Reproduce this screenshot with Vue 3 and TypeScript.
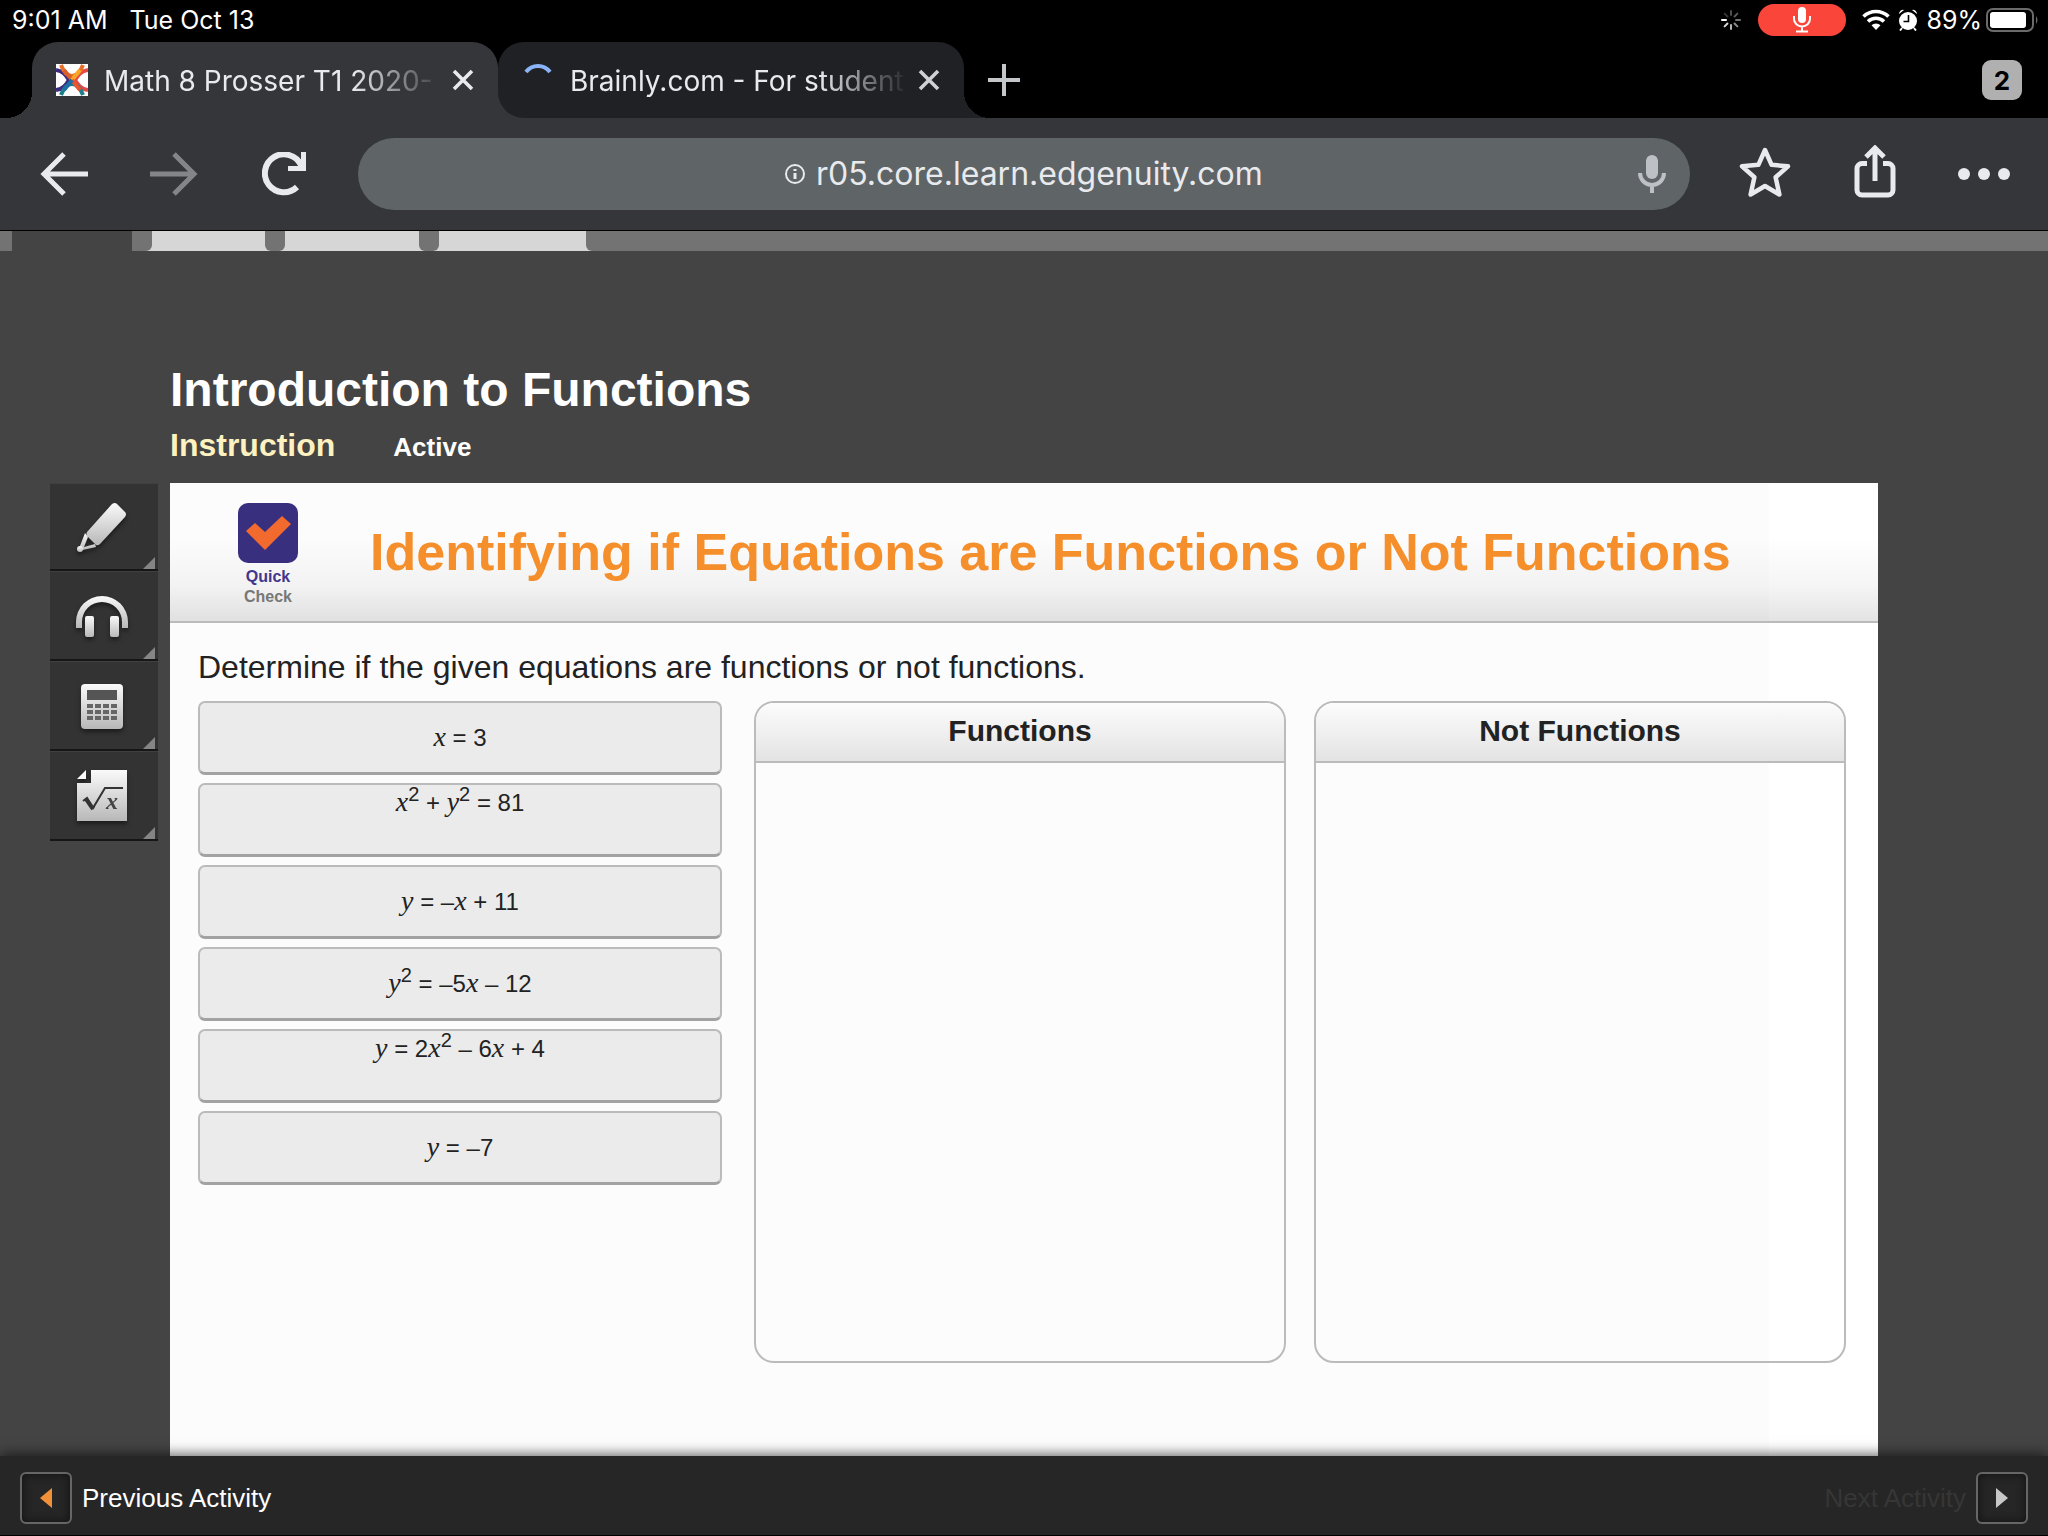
<script setup lang="ts">
import { ref } from 'vue'

type Kind = 'num' | 'var' | 'sup'
interface Token { kind: Kind; text: string }
interface Equation { tokens: Token[]; raised: boolean }

const n = (text: string): Token => ({ kind: 'num', text })
const v = (text: string): Token => ({ kind: 'var', text })
const s = (text: string): Token => ({ kind: 'sup', text })

const equations: Equation[] = [
  { raised: false, tokens: [v('x'), n(' = 3')] },
  { raised: true, tokens: [v('x'), s('2'), n(' + '), v('y'), s('2'), n(' = 81')] },
  { raised: false, tokens: [v('y'), n(' = –'), v('x'), n(' + 11')] },
  { raised: false, tokens: [v('y'), s('2'), n(' = –5'), v('x'), n(' – 12')] },
  { raised: true, tokens: [v('y'), n(' = 2'), v('x'), s('2'), n(' – 6'), v('x'), n(' + 4')] },
  { raised: false, tokens: [v('y'), n(' = –7')] },
]
const bins = ['Functions', 'Not Functions']
const tools = ['Highlighter', 'Read aloud', 'Calculator', 'Formulas']
const address = ref('r05.core.learn.edgenuity.com')
const rays = [0.3, 0.35, 0.45, 0.55, 0.7, 0.85, 1, 0.2]
</script>

<template>
  <div class="screen">
    <header class="browser">
      <div class="status">
        <span>9:01 AM</span>
        <span class="date">Tue Oct 13</span>
        <svg class="busy" width="22" height="22" viewBox="-11 -11 22 22" stroke="#fff" stroke-width="2" stroke-linecap="round">
          <line v-for="(o, i) in rays" :key="i" x1="0" y1="-5" x2="0" y2="-9" :opacity="o" :transform="`rotate(${i * 45})`" />
        </svg>
        <span class="recording">
          <svg width="20" height="26" viewBox="0 0 20 26" fill="none" stroke="#fff" stroke-width="2">
            <rect x="6" y="0" width="8" height="16" rx="4" fill="#fff" stroke="none" />
            <path d="M2 9v3a8 7.500 0 0 0 16 0V9M10 19v5M4 24.500h12" />
          </svg>
        </span>
        <svg class="wifi" width="28" height="22" viewBox="0 0 28 22" fill="none" stroke="#fff" stroke-width="3.600">
          <path d="M1.500 7.500a18 18 0 0 1 25 0M6 12.500a11.500 11.500 0 0 1 16 0" />
          <path d="M14 21l-4.500-4.700a6.500 6.500 0 0 1 9 0z" fill="#fff" stroke="none" />
        </svg>
        <svg class="alarm" width="20" height="22" viewBox="0 0 20 22">
          <circle cx="10" cy="12" r="9" fill="#fff" />
          <path d="M1 5a4 4 0 0 1 5-4zM19 5a4 4 0 0 0-5-4z" fill="#fff" />
          <path d="M4 19l-2 2.500M16 19l2 2.500" stroke="#fff" stroke-width="2" />
          <path d="M10.500 6v6.500H5.500" fill="none" stroke="#000" stroke-width="1.600" />
        </svg>
        <span class="percent">89%</span>
        <svg class="battery" width="54" height="24" viewBox="0 0 54 24">
          <rect x="1" y="1" width="46" height="22" rx="6" fill="none" stroke="#6b6b6b" stroke-width="2" />
          <rect x="4" y="4" width="36" height="16" rx="3" fill="#fff" />
          <path d="M50 8q3 4 0 8z" fill="#6b6b6b" />
        </svg>
      </div>

      <div class="tabs">
        <div class="tab active">
          <svg class="favicon" width="32" height="32" viewBox="0 0 32 32" fill="none" stroke-width="4">
            <rect width="32" height="32" fill="#fff" />
            <path d="M0 6c7 1 10 5 13 10-3 5-6 9-13 10" stroke="#3b2a80" />
            <path d="M32 6c-7 1-10 5-13 10 3 5 6 9 13 10" stroke="#e5484a" />
            <path d="M5 1c3 8 7 11 11 11s8-3 11-11" stroke="#e8702a" />
            <path d="M5 31c3-8 7-11 11-11s8 3 11 11" stroke="#1f7f8c" />
            <path d="M8 6l8 10" stroke="#d95f2b" />
            <path d="M24 6l-8 10" stroke="#f9a825" />
            <path d="M16 16l8 10" stroke="#e8562f" />
            <path d="M16 16l-8 10" stroke="#1d6fa5" />
          </svg>
          <span class="tab-name">Math 8 Prosser T1 2020-</span>
          <button class="icon" aria-label="Close tab">
            <svg width="22" height="22" viewBox="0 0 22 22" stroke="#e8eaed" stroke-width="3.600"><path d="M2 2l18 18M20 2L2 20" /></svg>
          </button>
        </div>
        <div class="tab waiting">
          <svg class="favicon" width="32" height="32" viewBox="0 0 32 32" fill="none" stroke="#8ab4f8" stroke-width="4">
            <path d="M4 8A15 15 0 0 1 28 8" />
          </svg>
          <span class="tab-name">Brainly.com - For student</span>
          <button class="icon" aria-label="Close tab">
            <svg width="22" height="22" viewBox="0 0 22 22" stroke="#cfd1d4" stroke-width="3.600"><path d="M2 2l18 18M20 2L2 20" /></svg>
          </button>
        </div>
        <button class="icon new-tab" aria-label="New tab">
          <svg width="32" height="32" viewBox="0 0 32 32" stroke="#c4c7ca" stroke-width="4"><path d="M16 0v32M0 16h32" /></svg>
        </button>
        <button class="count">2</button>
      </div>

      <nav class="toolbar">
        <button class="icon" aria-label="Back">
          <svg width="48" height="44" viewBox="0 0 48 44" fill="none" stroke="#e8eaed" stroke-width="5"><path d="M48 22H4M24 2L4 22l20 20" /></svg>
        </button>
        <button class="icon forward" aria-label="Forward">
          <svg width="48" height="44" viewBox="0 0 48 44" fill="none" stroke="#848589" stroke-width="5"><path d="M0 22h44M24 2l20 20-20 20" /></svg>
        </button>
        <button class="icon reload" aria-label="Reload">
          <svg width="46" height="44" viewBox="0 0 46 44" fill="none" stroke="#e8eaed" stroke-width="6">
            <path d="M35 35A19 19 0 1 1 39 13" />
            <path d="M44 0v19H26v-5h10l3-5V0z" fill="#e8eaed" stroke="none" />
          </svg>
        </button>
        <label class="omnibox">
          <svg class="info" width="22" height="22" viewBox="0 0 22 22" fill="none" stroke="#e8eaed" stroke-width="2">
            <circle cx="11" cy="11" r="9" /><path d="M11 10v6M11 6v2" stroke-width="3" />
          </svg>
          <input v-model="address" type="text" aria-label="Address">
          <svg class="mic" width="28" height="38" viewBox="0 0 28 38" fill="none" stroke="#bdc1c6" stroke-width="4">
            <rect x="8" y="0" width="12" height="24" rx="6" fill="#bdc1c6" stroke="none" />
            <path d="M2 18a12 12 0 0 0 24 0M14 30v8" />
          </svg>
        </label>
        <button class="icon lifted" aria-label="Bookmark">
          <svg width="54" height="54" viewBox="0 0 54 54" fill="none" stroke="#e8eaed" stroke-width="4.500" stroke-linejoin="round">
            <path d="M27 5l6.600 14.800L50 21.300 37.600 32.300l3.800 17.200L27 41 12.600 49.500l3.800-17.200L4 21.300l16.400-1.500z" />
          </svg>
        </button>
        <button class="icon share lifted" aria-label="Share">
          <svg width="42" height="54" viewBox="0 0 42 54" fill="none" stroke="#e8eaed" stroke-width="5">
            <path d="M13 18.500H8a5 5 0 0 0-5 5V45a5 5 0 0 0 5 5h26a5 5 0 0 0 5-5V23.500a5 5 0 0 0-5-5h-5M21 36V4M12 12l9-9 9 9" />
          </svg>
        </button>
        <button class="icon more" aria-label="More">
          <svg width="52" height="12" viewBox="0 0 52 12" fill="#e8eaed"><circle cx="6" cy="6" r="6" /><circle cx="26" cy="6" r="6" /><circle cx="46" cy="6" r="6" /></svg>
        </button>
      </nav>
    </header>

    <div class="strip"><i class="edge" /><i class="gap" /><i class="div" /><i class="lit a" /><i class="div" /><i class="lit b" /><i class="div" /><i class="lit c" /><i class="rest" /></div>

    <main class="lesson">
      <h1>Introduction to Functions</h1>
      <p class="meta"><span class="phase">Instruction</span><span class="state">Active</span></p>
      <div class="workspace">
        <aside class="rail">
          <svg width="0" height="0" class="defs">
            <linearGradient id="metal" x1="0" y1="0" x2="0" y2="1"><stop offset="0" stop-color="#fafafa" /><stop offset="1" stop-color="#b8b8b8" /></linearGradient>
          </svg>
          <button v-for="(tool, i) in tools" :key="tool" class="tool" :aria-label="tool">
            <svg v-if="i === 0" width="52" height="52" viewBox="0 0 52 52" fill="url(#metal)">
              <path d="M36 3q3-2 5 0l8 8q2 2 0 5L24 43q-2 2-4 1l-9-9q-1-2 0-4z" />
              <path d="M9 32L2 50l18-4-1-3-11 3 4-10z" /><circle cx="4" cy="48" r="3" />
            </svg>
            <svg v-else-if="i === 1" width="52" height="52" viewBox="0 0 52 52" fill="url(#metal)">
              <path d="M0 38V32a26 26 0 0 1 52 0v6h-6v-6a20 20 0 0 0-40 0v6z" />
              <rect x="9" y="26" width="9" height="21" rx="2" /><rect x="34" y="26" width="9" height="21" rx="2" />
            </svg>
            <svg v-else-if="i === 2" width="52" height="52" viewBox="0 0 52 52">
              <rect x="5" y="4" width="42" height="45" rx="4" fill="url(#metal)" />
              <rect x="11" y="10" width="30" height="10" fill="#555" />
              <g fill="#666">
                <template v-for="r in 3" :key="r"><rect v-for="c in 4" :key="c" :x="3 + c * 8" :y="18 + r * 6" width="6" height="4" /></template>
              </g>
            </svg>
            <svg v-else width="52" height="52" viewBox="0 0 52 52">
              <path d="M15 0h36v51H1V13h14z" fill="url(#metal)" /><path d="M1 9L10 0v9z" fill="#fff" />
              <path d="M7 31l4-3 6 10L29 18h18" fill="none" stroke="#333" stroke-width="2" /><path d="M10 29l7 10" stroke="#333" stroke-width="4" />
              <text x="30" y="39" class="radicand">x</text>
            </svg>
          </button>
        </aside>

        <section class="activity">
          <header class="banner">
            <div class="badge">
              <svg width="60" height="60" viewBox="0 0 60 60"><rect width="60" height="60" rx="10" fill="#38307f" /><path d="M8 28l9-8 10 9 17-16 9 8-26 26z" fill="#f26a2e" /></svg>
              <b>Quick</b><b class="grey">Check</b>
            </div>
            <h2>Identifying if Equations are Functions or Not Functions</h2>
          </header>
          <p class="prompt">Determine if the given equations are functions or not functions.</p>
          <div class="board">
            <div class="cards">
              <button v-for="(eq, i) in equations" :key="i" class="card" :class="{ raised: eq.raised }">
                <span v-for="(t, j) in eq.tokens" :key="j" :class="t.kind">{{ t.text }}</span>
              </button>
            </div>
            <div v-for="bin in bins" :key="bin" class="bin"><h3>{{ bin }}</h3></div>
          </div>
        </section>
      </div>
    </main>

    <footer class="pager">
      <button class="step"><span class="box"><svg width="12" height="20" viewBox="0 0 12 20"><path d="M12 0v20L0 10z" fill="#f0913a" /></svg></span>Previous Activity</button>
      <button class="step next" disabled>Next Activity<span class="box"><svg width="12" height="20" viewBox="0 0 12 20"><path d="M0 0v20l12-10z" fill="#c8c8c8" /></svg></span></button>
    </footer>
  </div>
</template>

<style>
body { margin: 0; background: #444; }
</style>

<style scoped>
* { box-sizing: border-box; }
h1, h2, h3, p { margin: 0; }
button { border: 0; padding: 0; background: none; color: inherit; font: inherit; }
svg { display: block; flex: none; }
.screen { min-height: 100vh; display: flex; flex-direction: column; background: #444; font-family: "Liberation Sans", Arial, sans-serif; }
.browser { font-family: Inter, sans-serif; color: #fff; background: #000; border-bottom: 1px solid #000; }
.icon { display: flex; flex: none; }

.status { display: flex; align-items: center; height: 42px; padding: 0 8px 2px 12px; font-size: 25px; }
.date { margin: 0 auto 0 22px; }
.busy { margin-right: 16px; }
.recording { display: flex; justify-content: center; align-items: center; width: 88px; height: 32px; border-radius: 16px; background: #f9453a; }
.wifi { margin-left: 16px; }
.alarm { margin: 0 8px; }
.battery { margin-left: 4px; }

.tabs { display: flex; align-items: center; height: 76px; padding: 0 26px 0 32px; }
.tab { position: relative; display: flex; align-items: center; width: 466px; height: 76px; padding: 0 24px; border-radius: 26px 26px 0 0; font-size: 28px; color: #e8eaed; }
.tab.active { background: #35363a; }
.tab.waiting { background: #202124; border-bottom-left-radius: 26px; }
.tab.active::before, .tab.active::after, .tab.waiting::after { content: ""; position: absolute; bottom: 0; width: 26px; height: 26px; }
.tab.active::before { left: -26px; background: radial-gradient(circle at 0 0, transparent 26px, #35363a 26px); }
.tab.active::after { right: -26px; background: #35363a; z-index: 0; }
.tab.waiting { z-index: 1; }
.tab.waiting::after { right: -26px; background: radial-gradient(circle at 100% 0, transparent 26px, #202124 26px); }
.tab-name { flex: 1; min-width: 0; margin: 0 2px 0 16px; padding-top: 2px; white-space: nowrap; mask-image: linear-gradient(90deg, #000 72%, transparent 98%); }
.new-tab { margin: 0 auto 0 24px; }
.count { width: 40px; height: 40px; border-radius: 9px; background: #b0b0b0; color: #000; font-size: 26px; font-weight: 700; }

.toolbar { display: flex; align-items: center; height: 112px; padding: 0 38px 0 40px; background: #35363a; }
.forward { margin-left: 62px; }
.reload { margin: 0 50px 0 64px; }
.omnibox { display: flex; flex: 1; align-items: center; height: 72px; margin-right: 48px; padding: 0 24px 0 52px; border-radius: 36px; background: #5f6467; }
.info { margin-left: auto; }
.omnibox input { width: 448px; margin: 0 auto 0 10px; padding: 0 0 2px; border: 0; background: none; color: #e8eaed; font-family: inherit; font-size: 32px; }
.lifted { padding-bottom: 4px; }
.share { margin-left: 62px; }
.more { margin-left: 62px; }

.strip { display: flex; height: 20px; background: #d6d6d6; }
.edge { width: 12px; background: #737373; }
.gap { width: 120px; background: #444; }
.div { width: 20px; background: #737373; border-radius: 0 0 6px 6px; }
.gap + .div { border-bottom-left-radius: 0; }
.lit.a { width: 113px; }
.lit.b { width: 134px; }
.lit.c { width: 147px; }
.rest { flex: 1; background: #737373; border-bottom-left-radius: 6px; }

.lesson { flex: 1; display: flex; flex-direction: column; padding-top: 110px; }
h1 { padding-left: 170px; font-size: 48px; line-height: 58px; color: #fff; }
.meta { display: flex; align-items: baseline; padding-left: 170px; font-weight: 700; line-height: 36px; margin: 8px 0 18px; }
.phase { font-size: 32px; color: #fdf2c0; }
.state { margin-left: 58px; font-size: 26px; color: #fff; }
.workspace { flex: 1; display: flex; gap: 12px; padding: 0 170px 0 50px; }
.rail { width: 108px; }
.defs { position: absolute; }
.tool { position: relative; display: flex; align-items: center; justify-content: center; width: 108px; height: 90px; padding-right: 4px; background: #333; border-bottom: 2px solid #161616; border-top: 1px solid #404040; }
.tool:first-of-type { height: 88px; }
.tool svg { filter: drop-shadow(0 3px 2px #1c1c1c); }
.tool::after { content: ""; position: absolute; right: 3px; bottom: 0; border: 6px solid transparent; border-right-color: #858585; border-bottom-color: #858585; }
.radicand { font: italic 700 24px "Liberation Serif", serif; fill: #444; }

.activity { flex: 1; min-width: 0; background: linear-gradient(90deg, #fcfcfc 93.600%, #fff 93.600%); }
.banner { display: flex; align-items: center; height: 140px; padding-left: 68px; border-bottom: 2px solid #bbb; background: linear-gradient(#fff0 40%, #0000000a 75%, #0000001c); }
.badge { display: flex; flex-direction: column; align-self: flex-start; align-items: center; width: 60px; margin-top: 20px; font-size: 16px; line-height: 20px; color: #43368c; }
.badge svg { margin-bottom: 4px; }
.grey { color: #777; }
h2 { margin-left: 72px; font-size: 52px; line-height: 60px; color: #f58f2c; white-space: nowrap; }
.prompt { padding: 24px 28px 14px; font-size: 32px; line-height: 40px; color: #222; }
.board { display: grid; grid-template-columns: 528fr 532fr 532fr; column-gap: 28px; padding: 0 32px 0 28px; color: #222; }
.cards { display: flex; flex-direction: column; gap: 8px; margin-right: 4px; }
.card { height: 74px; padding: 0; border: 2px solid #bbb; border-bottom: 3px solid #a2a2a2; border-radius: 7px; background: #ebebeb; font-size: 24px; line-height: 28px; white-space: pre; }
.card.raised { padding-bottom: 34px; }
.var { font: italic 28px/28px "Liberation Serif", serif; }
.sup { font-size: 20px; line-height: 0; vertical-align: 10px; }
.bin { height: 662px; border: 2px solid #bbb; border-radius: 20px; overflow: hidden; }
h3 { height: 60px; padding-top: 10px; border-bottom: 2px solid #bbb; background: linear-gradient(#fcfcfc, #e3e3e3); font-size: 30px; line-height: 36px; text-align: center; }

.pager { position: relative; display: flex; justify-content: space-between; height: 80px; padding: 16px 20px 0; background: #262626; border-bottom: 1px solid #000; box-shadow: 0 -2px 12px #0009; color: #fff; font-size: 26px; }
.step { display: flex; align-items: center; gap: 10px; height: 52px; }
.box { display: flex; align-items: center; justify-content: center; width: 52px; height: 52px; border: 2px solid #666; border-radius: 6px; box-shadow: inset 0 0 10px #111; }
.next { color: #363636; }
</style>
